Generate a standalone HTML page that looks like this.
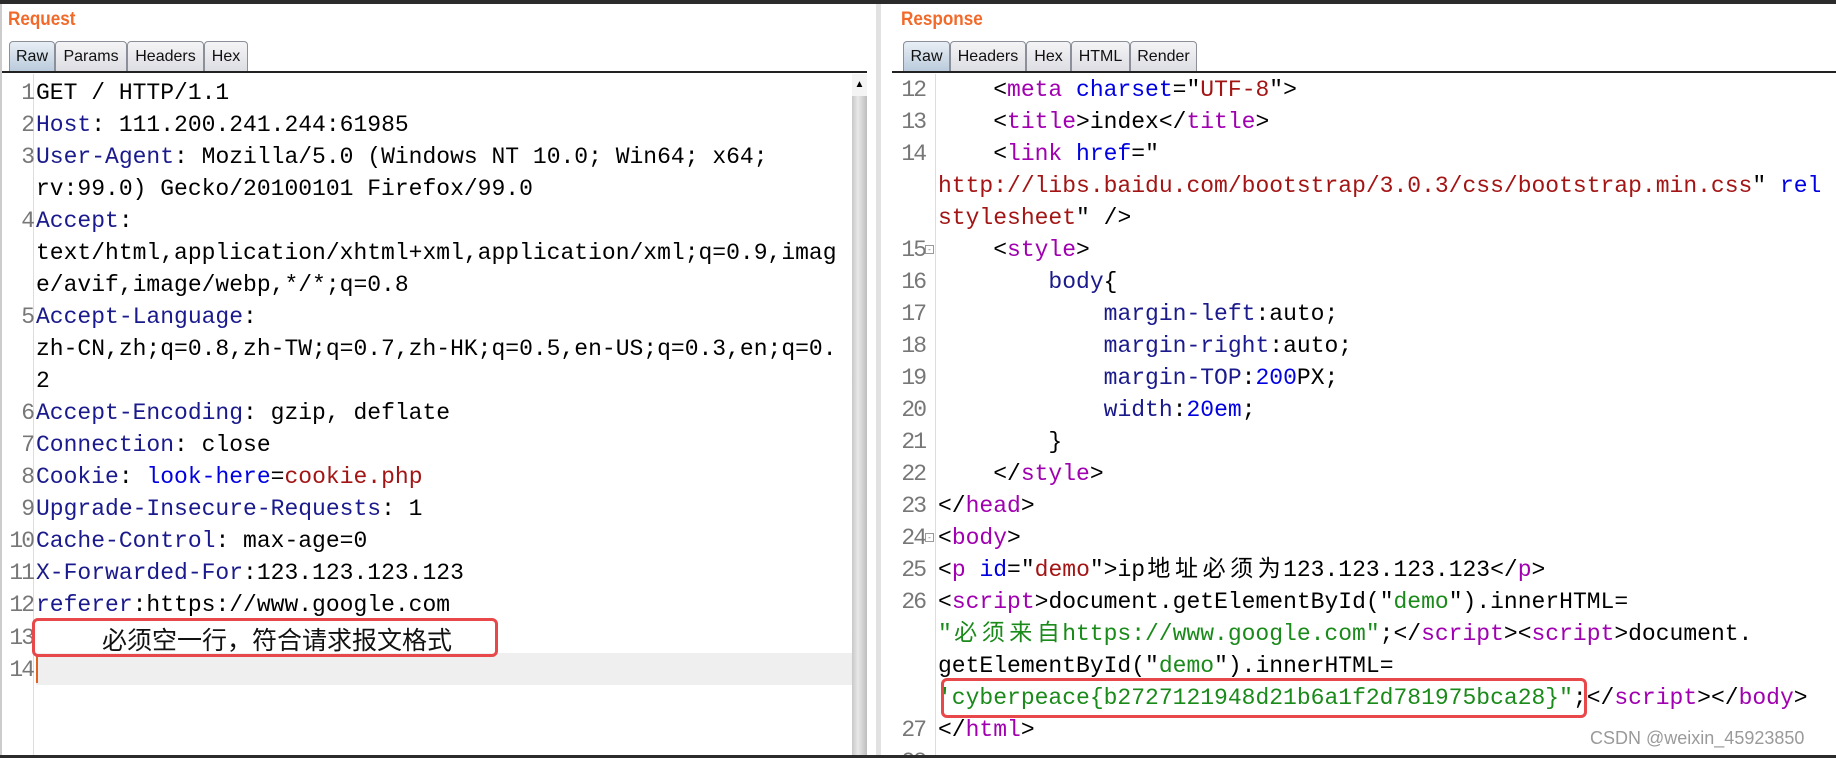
<!DOCTYPE html>
<html><head><meta charset="utf-8"><style>
*{margin:0;padding:0;box-sizing:border-box}
body{width:1836px;height:758px;background:#fff;position:relative;overflow:hidden;font-family:"Liberation Sans",sans-serif}
.top{position:absolute;left:0;top:0;width:1836px;height:4px;background:#2b2b2b}
.bot{position:absolute;left:0;top:755px;width:1836px;height:3px;background:#2b2b2b}
.lbl{position:absolute;top:9px;font-weight:bold;font-size:19px;color:#f26a2a;transform:scaleX(.9);transform-origin:left}
.tab{position:absolute;top:41px;height:31px;border:1px solid #8a8f99;border-bottom:none;border-radius:4px 4px 0 0;background:linear-gradient(#f4f4f6,#dcdde2);font-size:16px;line-height:30px;text-align:center;color:#111}
.tab.on{background:linear-gradient(#e8eef5,#b9cadb)}
.strip{position:absolute;top:71px;height:2px;background:#222}
.code{position:absolute;font-family:"Liberation Mono","Noto Sans CJK SC",monospace;font-size:23px;white-space:pre;overflow:hidden}
.r{position:absolute;height:32px;line-height:32px;white-space:pre}
.n{position:absolute;height:32px;line-height:32px;color:#777;text-align:right;font-family:"Liberation Mono",monospace;font-size:23px;letter-spacing:-2px}
.h{color:#1a1a8c}.b{color:#0000e0}.s{color:#a31515}.g{color:#1a8a1a}.t{color:#a000b0}
.cj{display:inline-block;width:27.6px;text-align:center}
</style></head><body>
<div class="top"></div>
<div class="lbl" style="left:8px">Request</div>
<div class="tab on" style="left:9px;width:46px">Raw</div>
<div class="tab" style="left:55px;width:72px">Params</div>
<div class="tab" style="left:127px;width:77px">Headers</div>
<div class="tab" style="left:204px;width:44px">Hex</div>
<div class="strip" style="left:2px;width:865px"></div>
<div style="position:absolute;left:33px;top:74px;width:1px;height:681px;background:#ddd"></div>
<div style="position:absolute;left:36px;top:653px;width:816px;height:32px;background:#efefef"></div>
<div style="position:absolute;left:36px;top:656px;width:2px;height:27px;background:#e06020"></div>
<div style="position:absolute;left:852px;top:74px;width:15px;height:681px;background:linear-gradient(90deg,#c8c8c8,#e8e8e8 40%,#bdbdbd)"></div>
<div style="position:absolute;left:852px;top:74px;width:15px;height:22px;background:#f4f4f4;font-size:10px;text-align:center;line-height:22px">▲</div>
<div style="position:absolute;left:876px;top:4px;width:5px;height:751px;background:#e2e2e2"></div>
<div style="position:absolute;left:0;top:4px;width:2px;height:751px;background:#ccc"></div>

<div class="code" style="left:0;top:0;width:852px;height:755px">
<div class="n" style="top:77px;width:33px">1</div><div class="r" style="left:36px;top:77px">GET / HTTP/1.1</div>
<div class="n" style="top:109px;width:33px">2</div><div class="r" style="left:36px;top:109px"><span class="h">Host</span>: 111.200.241.244:61985</div>
<div class="n" style="top:141px;width:33px">3</div><div class="r" style="left:36px;top:141px"><span class="h">User-Agent</span>: Mozilla/5.0 (Windows NT 10.0; Win64; x64;</div>
<div class="r" style="left:36px;top:173px">rv:99.0) Gecko/20100101 Firefox/99.0</div>
<div class="n" style="top:205px;width:33px">4</div><div class="r" style="left:36px;top:205px"><span class="h">Accept</span>:</div>
<div class="r" style="left:36px;top:237px">text/html,application/xhtml+xml,application/xml;q=0.9,imag</div>
<div class="r" style="left:36px;top:269px">e/avif,image/webp,*/*;q=0.8</div>
<div class="n" style="top:301px;width:33px">5</div><div class="r" style="left:36px;top:301px"><span class="h">Accept-Language</span>:</div>
<div class="r" style="left:36px;top:333px">zh-CN,zh;q=0.8,zh-TW;q=0.7,zh-HK;q=0.5,en-US;q=0.3,en;q=0.</div>
<div class="r" style="left:36px;top:365px">2</div>
<div class="n" style="top:397px;width:33px">6</div><div class="r" style="left:36px;top:397px"><span class="h">Accept-Encoding</span>: gzip, deflate</div>
<div class="n" style="top:429px;width:33px">7</div><div class="r" style="left:36px;top:429px"><span class="h">Connection</span>: close</div>
<div class="n" style="top:461px;width:33px">8</div><div class="r" style="left:36px;top:461px"><span class="h">Cookie</span>: <span class="b">look-here</span>=<span class="s">cookie.php</span></div>
<div class="n" style="top:493px;width:33px">9</div><div class="r" style="left:36px;top:493px"><span class="h">Upgrade-Insecure-Requests</span>: 1</div>
<div class="n" style="top:525px;width:33px">10</div><div class="r" style="left:36px;top:525px"><span class="h">Cache-Control</span>: max-age=0</div>
<div class="n" style="top:557px;width:33px">11</div><div class="r" style="left:36px;top:557px"><span class="h">X-Forwarded-For</span>:123.123.123.123</div>
<div class="n" style="top:589px;width:33px">12</div><div class="r" style="left:36px;top:589px"><span class="h">referer</span>:https://www.google.com</div>
<div class="n" style="top:622px;width:33px">13</div>
<div class="n" style="top:654px;width:33px">14</div>
</div>
<div style="position:absolute;left:32px;top:618px;width:466px;height:39px;border:3px solid #e8484a;border-radius:6px"></div>
<div style="position:absolute;left:102px;top:621px;height:36px;line-height:36px;font-size:25px;font-family:'Noto Sans CJK SC',sans-serif;color:#111;white-space:nowrap">必须空一行，符合请求报文格式</div>

<div class="lbl" style="left:901px">Response</div>
<div class="tab on" style="left:903px;width:47px">Raw</div>
<div class="tab" style="left:950px;width:76px">Headers</div>
<div class="tab" style="left:1026px;width:45px">Hex</div>
<div class="tab" style="left:1071px;width:59px">HTML</div>
<div class="tab" style="left:1130px;width:67px">Render</div>
<div class="strip" style="left:892px;width:944px"></div>
<div style="position:absolute;left:935px;top:74px;width:1px;height:681px;background:#ddd"></div>

<div class="code" style="left:880px;top:0;width:956px;height:755px">
<div class="n" style="left:12px;top:74px;width:33px">12</div><div class="r" style="left:58px;top:74px">    &lt;<span class="t">meta</span> <span class="b">charset</span>="<span class="s">UTF-8</span>"&gt;</div>
<div class="n" style="left:12px;top:106px;width:33px">13</div><div class="r" style="left:58px;top:106px">    &lt;<span class="t">title</span>&gt;index&lt;/<span class="t">title</span>&gt;</div>
<div class="n" style="left:12px;top:138px;width:33px">14</div><div class="r" style="left:58px;top:138px">    &lt;<span class="t">link</span> <span class="b">href</span>="</div>
<div class="r" style="left:58px;top:170px"><span class="s">http://libs.baidu.com/bootstrap/3.0.3/css/bootstrap.min.css</span>" <span class="b">rel</span></div>
<div class="r" style="left:58px;top:202px"><span class="s">stylesheet</span>" /&gt;</div>
<div class="n" style="left:12px;top:234px;width:33px">15</div><div class="r" style="left:58px;top:234px">    &lt;<span class="t">style</span>&gt;</div>
<div class="n" style="left:12px;top:266px;width:33px">16</div><div class="r" style="left:58px;top:266px">        <span class="h">body</span>{</div>
<div class="n" style="left:12px;top:298px;width:33px">17</div><div class="r" style="left:58px;top:298px">            <span class="h">margin-left</span>:auto;</div>
<div class="n" style="left:12px;top:330px;width:33px">18</div><div class="r" style="left:58px;top:330px">            <span class="h">margin-right</span>:auto;</div>
<div class="n" style="left:12px;top:362px;width:33px">19</div><div class="r" style="left:58px;top:362px">            <span class="h">margin-TOP</span>:<span class="b">200</span>PX;</div>
<div class="n" style="left:12px;top:394px;width:33px">20</div><div class="r" style="left:58px;top:394px">            <span class="h">width</span>:<span class="b">20em</span>;</div>
<div class="n" style="left:12px;top:426px;width:33px">21</div><div class="r" style="left:58px;top:426px">        }</div>
<div class="n" style="left:12px;top:458px;width:33px">22</div><div class="r" style="left:58px;top:458px">    &lt;/<span class="t">style</span>&gt;</div>
<div class="n" style="left:12px;top:490px;width:33px">23</div><div class="r" style="left:58px;top:490px">&lt;/<span class="t">head</span>&gt;</div>
<div class="n" style="left:12px;top:522px;width:33px">24</div><div class="r" style="left:58px;top:522px">&lt;<span class="t">body</span>&gt;</div>
<div class="n" style="left:12px;top:554px;width:33px">25</div><div class="r" style="left:58px;top:554px">&lt;<span class="t">p</span> <span class="b">id</span>="<span class="s">demo</span>"&gt;ip<span class="cj">地</span><span class="cj">址</span><span class="cj">必</span><span class="cj">须</span><span class="cj">为</span>123.123.123.123&lt;/<span class="t">p</span>&gt;</div>
<div class="n" style="left:12px;top:586px;width:33px">26</div><div class="r" style="left:58px;top:586px">&lt;<span class="t">script</span>&gt;document.getElementById("<span class="g">demo</span>").innerHTML=</div>
<div class="r" style="left:58px;top:618px"><span class="g">"<span class="cj">必</span><span class="cj">须</span><span class="cj">来</span><span class="cj">自</span>https://www.google.com"</span>;&lt;/<span class="t">script</span>&gt;&lt;<span class="t">script</span>&gt;document.</div>
<div class="r" style="left:58px;top:650px">getElementById("<span class="g">demo</span>").innerHTML=</div>
<div class="r" style="left:58px;top:682px"><span class="g">'cyberpeace{b2727121948d21b6a1f2d781975bca28}"</span>;&lt;/<span class="t">script</span>&gt;&lt;/<span class="t">body</span>&gt;</div>
<div class="n" style="left:12px;top:714px;width:33px">27</div><div class="r" style="left:58px;top:714px">&lt;/<span class="t">html</span>&gt;</div>
<div class="n" style="left:12px;top:746px;width:33px">28</div>
</div>
<div style="position:absolute;left:925px;top:245px;width:9px;height:9px;border:1px solid #999;font-size:8px;line-height:7px;text-align:center;color:#666;background:#fff">-</div>
<div style="position:absolute;left:925px;top:533px;width:9px;height:9px;border:1px solid #999;font-size:8px;line-height:7px;text-align:center;color:#666;background:#fff">-</div>
<div style="position:absolute;left:941px;top:678px;width:646px;height:40px;border:3px solid #e8484a;border-radius:6px"></div>
<div style="position:absolute;left:1590px;top:728px;font-size:18px;color:#9a9a9a;white-space:nowrap">CSDN @weixin_45923850</div>
<div class="bot"></div>
</body></html>
